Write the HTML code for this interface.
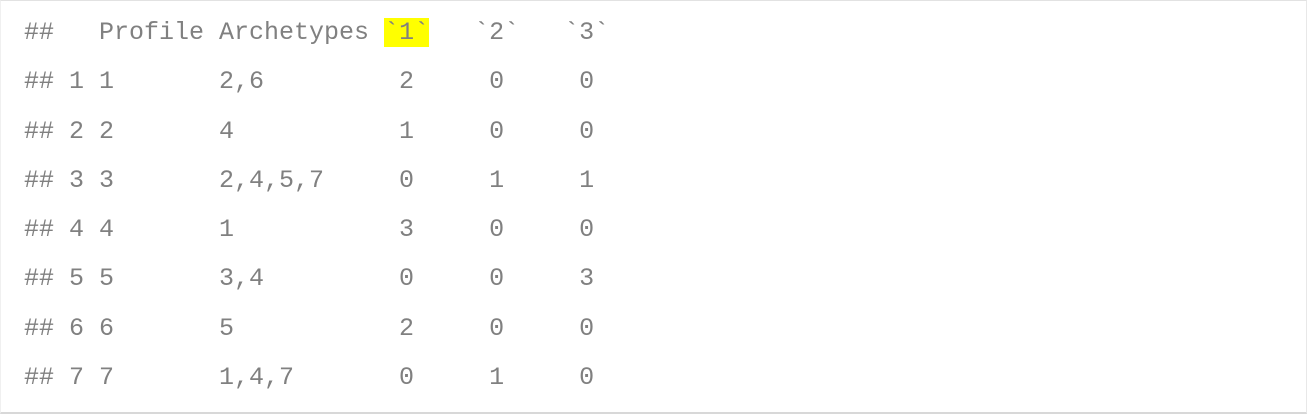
<!DOCTYPE html>
<html><head><meta charset="utf-8"><style>
html,body{margin:0;padding:0;background:#fff;width:1307px;height:415px;overflow:hidden}
.box{position:absolute;left:0;top:0;width:1305px;height:411px;border-top:1px solid #e2e2e2;border-bottom:2px solid #d8d8d8;border-left:1px solid #f0f0f0;border-right:1px solid #e8e8e8}
pre{position:absolute;left:24px;top:8px;margin:0;font-family:"Liberation Mono",monospace;font-size:25px;line-height:49.3px;color:#808080;letter-spacing:0}
.h{background:#ffff00}
</style></head><body>
<div class="box"></div>
<pre>##   Profile Archetypes <span class="h">`1`</span>   `2`   `3`
## 1 1       2,6         2     0     0
## 2 2       4           1     0     0
## 3 3       2,4,5,7     0     1     1
## 4 4       1           3     0     0
## 5 5       3,4         0     0     3
## 6 6       5           2     0     0
## 7 7       1,4,7       0     1     0</pre>
</body></html>
